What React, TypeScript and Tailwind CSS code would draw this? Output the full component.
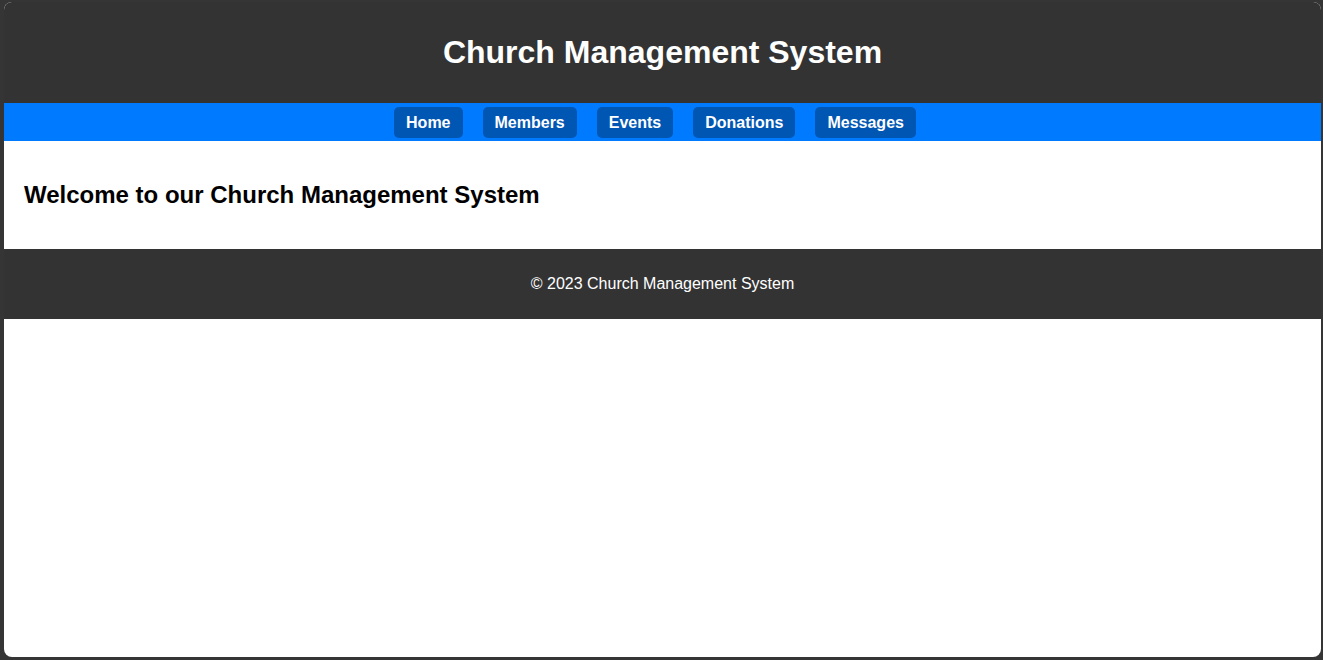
import React from 'react';

const links = ['Home', 'Members', 'Events', 'Donations', 'Messages'];

export default function App() {
  return (
    <div className="h-[660px] w-full bg-[#353535] pt-[2px] pl-[4px] pr-[2px] pb-[3px] font-['Liberation_Sans',Arial,sans-serif]">
      <div className="h-full flex flex-col rounded-lg overflow-hidden bg-white">
        <header className="h-[101px] shrink-0 bg-[#333] flex items-center justify-center">
          <h1 className="text-[32px] font-bold text-white leading-normal -mt-[2px]">Church Management System</h1>
        </header>

        <nav className="h-[38px] shrink-0 bg-[#007bff] flex items-center justify-center">
          <ul className="flex pl-[5px]">
            {links.map((l) => (
              <li key={l} className="mr-5">
                <a href="#" className="block px-[12px] py-[6px] rounded-[5px] bg-[#0056b3] text-white font-bold text-base leading-[19px]">
                  {l}
                </a>
              </li>
            ))}
          </ul>
        </nav>

        <main className="p-5">
          <h2 className="my-[20px] text-2xl font-bold text-black leading-[28px]">Welcome to our Church Management System</h2>
        </main>

        <footer className="shrink-0 bg-[#333] py-[10px] text-center">
          <p className="my-4 text-white text-base leading-[18px]">&copy; 2023 Church Management System</p>
        </footer>
      </div>
    </div>
  );
}
